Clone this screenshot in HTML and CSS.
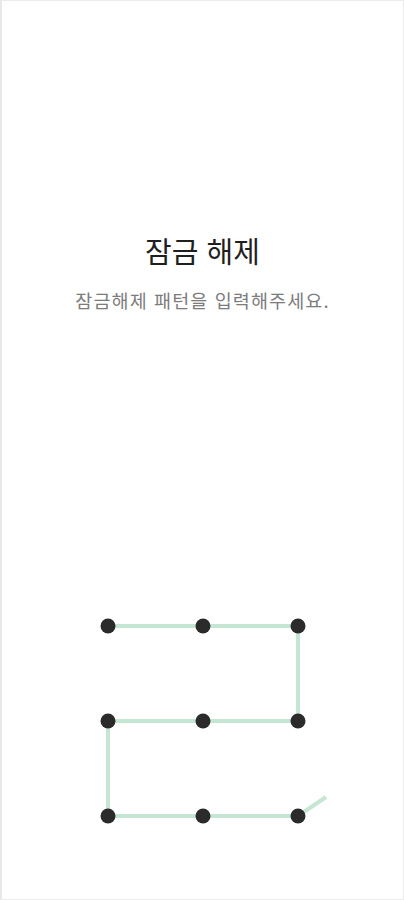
FILE: index.html
```html
<!DOCTYPE html>
<html lang="ko">
<head>
<meta charset="utf-8">
<link rel="stylesheet" href="styles.css">
</head>
<body>
<div class="screen">
  <div class="header">
    <h1 class="title">잠금 해제</h1>
    <p class="subtitle">잠금해제 패턴을 입력해주세요.</p>
  </div>
  <svg class="pattern" width="404" height="240" viewBox="0 0 404 240" xmlns="http://www.w3.org/2000/svg">
    <polyline points="107,25 202,25 297,25 297,120 202,120 107,120 107,215 202,215 297,215 325,196" fill="none" stroke="#c6e6d4" stroke-width="4" stroke-linecap="butt" stroke-linejoin="miter"/>
    <g fill="#2b2b2b">
      <circle cx="107" cy="25" r="7.5"/>
      <circle cx="202" cy="25" r="7.5"/>
      <circle cx="297" cy="25" r="7.5"/>
      <circle cx="107" cy="120" r="7.5"/>
      <circle cx="202" cy="120" r="7.5"/>
      <circle cx="297" cy="120" r="7.5"/>
      <circle cx="107" cy="215" r="7.5"/>
      <circle cx="202" cy="215" r="7.5"/>
      <circle cx="297" cy="215" r="7.5"/>
    </g>
  </svg>
</div>
</body>
</html>
```
FILE: styles.css
```css
html, body {
  margin: 0;
  padding: 0;
  background: #ffffff;
}
.screen {
  box-sizing: border-box;
  width: 404px;
  height: 900px;
  border: 1px solid #ececec;
  border-left: 2px solid #e8e8e8;
  display: flex;
  flex-direction: column;
  align-items: center;
  font-family: "Noto Sans CJK KR", "Noto Sans", sans-serif;
  overflow: hidden;
}
.header {
  margin-top: 229px;
  display: flex;
  flex-direction: column;
  align-items: center;
}
.title {
  margin: 0;
  font-size: 29px;
  line-height: 40px;
  font-weight: 400;
  color: #1f1f1f;
}
.subtitle {
  margin: 16px 0 0 0;
  font-size: 18.5px;
  line-height: 28px;
  color: #7c7c7c;
  letter-spacing: 1.1px;
}
.pattern {
  display: block;
  margin-top: 287px;
}
```
